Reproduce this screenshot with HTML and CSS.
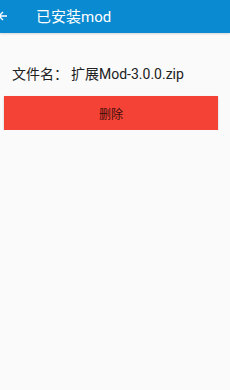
FILE: index.html
```html
<!DOCTYPE html>
<html lang="zh">
<head>
    <meta charset="UTF-8">
    <meta name="viewport" content="width=device-width, initial-scale=1.0">
    <title>已安装mod</title>
    <link rel="stylesheet" href="styles.css">
</head>
<body>
    <div class="toolbar">
        <svg class="back" width="10" height="12" viewBox="0 0 10 12">
            <path d="M9 6H1M5 2L1 6l4 4" fill="none" stroke="#fff" stroke-width="1.3"/>
        </svg>
        <span class="title">已安装mod</span>
    </div>
    <div class="content">
        <div class="file-row">
            <span class="label">文件名：</span>
            <span class="value">扩展Mod-3.0.0.zip</span>
        </div>
        <button class="delete">删除</button>
    </div>
</body>
</html>
```

FILE: styles.css
```css
body {
    margin: 0;
    background: #fafafa;
    font-family: Roboto, "Noto Sans CJK SC", sans-serif;
    color: #212121;
}
.toolbar {
    height: 31px;
    padding-bottom: 2px;
    background: #0a8ad0;
    color: white;
    display: flex;
    align-items: center;
    box-shadow: 0 1px 2px rgba(0, 0, 0, 0.15);
}
.back {
    margin-left: -2px;
}
.title {
    margin-left: 28px;
    font-size: 15px;
}
.content {
    padding: 0 4px;
}
.file-row {
    display: flex;
    align-items: center;
    height: 30px;
    margin-top: 25px;
    padding-left: 8px;
    font-size: 14px;
}
.label {
    width: 59px;
}
.delete {
    display: block;
    width: 214px;
    height: 34px;
    margin-top: 8px;
    background: #f44336;
    color: #3a0d0a;
    border: none;
    font-family: inherit;
    font-size: 12px;
    box-shadow: 0 1px 2px rgba(0, 0, 0, 0.2);
}
```
